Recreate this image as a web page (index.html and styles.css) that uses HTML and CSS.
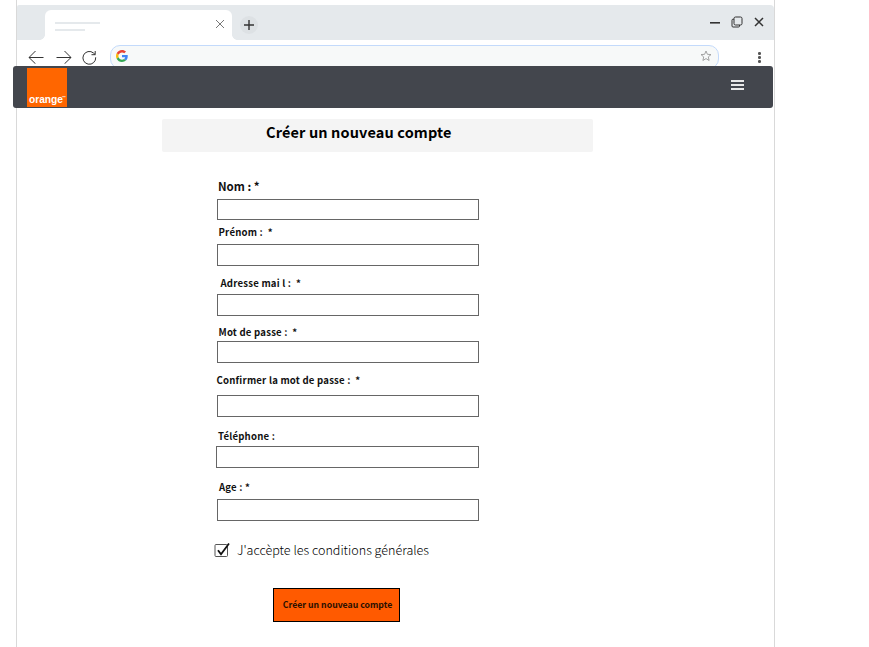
FILE: index.html
```html
<!DOCTYPE html>
<html lang="fr">
<head>
<meta charset="utf-8">
<title>Créer un nouveau compte</title>
<link rel="stylesheet" href="styles.css">
</head>
<body>
<div class="window">
  <div class="titlebar">
    <div class="tab">
      <div class="tab-lines"><i class="line"></i><i class="line short"></i></div>
      <svg class="tab-close" width="10" height="10" viewBox="0 0 10 10"><path d="M1 1l8 8M9 1L1 9"/></svg>
    </div>
    <div class="new-tab"><svg width="10" height="10" viewBox="0 0 10 10"><path d="M5 0v10M0 5h10"/></svg></div>
    <div class="controls">
      <svg width="10" height="12" viewBox="0 0 10 12"><path d="M0 6.800h10" stroke-width="1.600"/></svg>
      <svg width="12" height="12" viewBox="0 0 12 12"><rect x="3" y="1" width="8" height="8" rx="1.500"/><path d="M3 3.200H2A1 1 0 0 0 1 4.200V10a1 1 0 0 0 1 1h5.500a1 1 0 0 0 1-1V9"/></svg>
      <svg width="10" height="12" viewBox="0 0 10 12"><path d="M1 2l8 8M9 2L1 10" stroke-width="1.500"/></svg>
    </div>
  </div>
  <div class="toolbar">
    <svg class="nav" width="16" height="14" viewBox="0 0 16 14"><path d="M15.500 7.500H1M7.500 1L1 7.500l6.500 6.300"/></svg>
    <svg class="nav forward" width="16" height="14" viewBox="0 0 16 14"><path d="M.500 7.500H15M8.500 1L15 7.500l-6.500 6.300"/></svg>
    <svg class="nav reload" width="16" height="16" viewBox="0 0 16 16"><path d="M13.700 7.300A6.400 6.400 0 1 1 11.500 3L13.200 4.600M13.200 1V4.700H9.500"/></svg>
    <div class="address">
      <svg width="12" height="12" viewBox="0 0 48 48">
        <path fill="#ea4335" d="M24 9.500c3.500 0 6.700 1.200 9.200 3.600l6.900-6.900C35.900 2.400 30.500 0 24 0 14.600 0 6.500 5.400 2.600 13.200l8 6.200C12.400 13.700 17.700 9.500 24 9.500z"/>
        <path fill="#4285f4" d="M47 24.500c0-1.600-.2-3.100-.4-4.500H24v9h12.900c-.6 3-2.200 5.500-4.700 7.200l7.700 6C44.400 38 47 31.800 47 24.500z"/>
        <path fill="#fbbc05" d="M10.500 28.600c-.5-1.400-.8-3-.8-4.600s.3-3.200.8-4.600l-8-6.200C.9 16.500 0 20.100 0 24s.9 7.500 2.600 10.800z"/>
        <path fill="#34a853" d="M24 48c6.500 0 11.900-2.100 15.900-5.800l-7.700-6c-2.200 1.400-4.900 2.300-8.200 2.300-6.300 0-11.600-4.200-13.500-9.900l-8 6.200C6.500 42.600 14.600 48 24 48z"/>
      </svg>
      <svg class="star" width="12" height="12" viewBox="0 0 12 12"><path d="M6 1l1.400 3.300 3.600.3-2.700 2.300.8 3.600L6 8.600l-3.100 1.900.8-3.600L1 4.600l3.600-.3z"/></svg>
    </div>
    <div class="dots"><i></i><i></i><i></i></div>
  </div>
  <header class="site-header">
    <div class="logo">orange<sup>™</sup></div>
    <div class="burger"><i></i><i></i><i></i></div>
  </header>
  <h1 class="title">Créer un nouveau compte</h1>
  <form class="form">
    <div class="field nom"><label for="nom">Nom : *</label><input id="nom"></div>
    <div class="field prenom"><label for="prenom">Prénom :&nbsp; *</label><input id="prenom"></div>
    <div class="field mail"><label for="mail">Adresse mai l :&nbsp; *</label><input id="mail"></div>
    <div class="field passe"><label for="passe">Mot de passe :&nbsp; *</label><input id="passe" type="password"></div>
    <div class="field confirm"><label for="confirm">Confirmer la mot de passe :&nbsp; *</label><input id="confirm" type="password"></div>
    <div class="field tel"><label for="tel">Téléphone :</label><input id="tel"></div>
    <div class="field age"><label for="age">Age : *</label><input id="age"></div>
    <div class="terms">
      <svg width="16" height="16" viewBox="0 0 16 16"><rect x="1" y="2.500" width="12.500" height="12" rx="1" fill="none" stroke="#555"/><path d="M4 8.200l3 4L15 1.500" fill="none" stroke="#111" stroke-width="1.800"/></svg>
      <span>J'accèpte les conditions générales</span>
    </div>
    <button class="submit" type="button">Créer un nouveau compte</button>
  </form>
</div>
</body>
</html>
```
FILE: styles.css
```css
* { box-sizing: border-box; }
body {
  margin: 0;
  background: #fff;
  color: #111;
  font-family: "Noto Sans CJK JP", "Noto Sans", sans-serif;
  overflow: hidden;
}
svg { display: block; flex: none; }
.window {
  width: 759px;
  height: 647px;
  margin-left: 16px;
  padding-top: 5px;
  border: solid #d9d9d9;
  border-width: 0 1px;
}
.titlebar {
  display: flex;
  align-items: flex-start;
  height: 35px;
  padding: 5px 10px 0 28px;
  background: #e5e9ec;
  border-radius: 2px 4px 0 0;
}
.tab {
  display: flex;
  justify-content: space-between;
  position: relative;
  width: 187px;
  height: 30px;
  padding: 9px 7px 0 10px;
  background: #fff;
  border-radius: 6px 6px 0 0;
}
/* flared feet where the tab meets the toolbar */
.tab::before, .tab::after {
  content: "";
  position: absolute;
  bottom: 0;
  width: 5px;
  height: 5px;
}
.tab::before { left: -5px; background: radial-gradient(circle at 0 0, transparent 4.500px, #fff 5px); }
.tab::after { right: -5px; background: radial-gradient(circle at 100% 0, transparent 4.500px, #fff 5px); }
.tab-lines { padding-top: 3px; }
.line {
  display: block;
  width: 45px;
  height: 2px;
  margin-bottom: 5px;
  background: #e5e9ec;
}
.short { width: 30px; }
.titlebar path, .titlebar rect { fill: none; stroke: #333; }
.titlebar .tab-close path { stroke: #777; }
.new-tab {
  display: grid;
  place-items: center;
  width: 18px;
  height: 18px;
  margin: 6px 0 0 8px;
  border-radius: 50%;
  background: #dde1e4;
}
.new-tab path { stroke-width: 1.4; }
.controls { display: flex; gap: 11px; margin: 6px 0 0 auto; }
.toolbar {
  display: flex;
  align-items: flex-start;
  height: 26px;
  padding: 5px 13px 0 11px;
  overflow: hidden;
}
.nav { margin-top: 5px; fill: none; stroke: #333; }
.forward { margin-left: 12px; }
.reload { margin-left: 10px; }
.address {
  display: flex;
  justify-content: space-between;
  width: 609px;
  height: 24px;
  margin-left: 12px;
  padding: 4px 6px 0 5px;
  border: 1px solid #c3dafb;
  border-radius: 10px;
  background: #f7f9f9;
}
.star { fill: none; stroke: #999; stroke-width: .9; }
.dots { margin: 7px 0 0 auto; width: 3px; }
.dots i { display: block; width: 2.500px; height: 2.500px; margin-bottom: 1.500px; border-radius: 50%; background: #555; }
.site-header {
  display: flex;
  justify-content: space-between;
  align-items: flex-start;
  width: 760px;
  height: 42px;
  margin-left: -4px;
  padding: 2px 29px 0 14px;
  border-radius: 3px;
  background: #43464d;
  position: relative;
}
.logo {
  display: flex;
  align-items: flex-end;
  width: 40px;
  height: 39px;
  padding: 0 0 1px 2px;
  background: #ff6600;
  color: #fff;
  font: bold 10.200px/12px "Liberation Sans", sans-serif;
}
.logo sup { align-self: flex-end; font-size: 4px; line-height: 12px; padding-bottom: 2px; margin-left: -1px; }
.burger { width: 13px; margin-top: 12px; }
.burger i { display: block; height: 2px; margin-bottom: 2px; background: #e8e8e8; }
.title {
  width: 431px;
  height: 33px;
  margin: 11px 0 0 145px;
  padding-left: 104px;
  border-radius: 2px;
  background: #f4f4f4;
  color: #000;
  font-size: 14.500px;
  font-weight: 700;
  letter-spacing: .13px;
  line-height: 26px;
  white-space: nowrap;
}
.form { width: 263px; margin-left: 199px; }
.field { display: flex; flex-direction: column; padding-left: 1px; }
.field label {
  height: 14px;
  padding-left: 1.500px;
  font-size: 9.600px;
  font-weight: 700;
  letter-spacing: .21px;
  line-height: 14px;
  white-space: pre;
}
.field input {
  width: 262px;
  height: 22px;
  padding: 0 4px;
  border: 1px solid #666;
  background: #fff;
  font: 11px "Noto Sans CJK JP", sans-serif;
}
.nom { margin-top: 27px; gap: 6px; }
.field.nom label { padding-left: 1px; font-size: 11.500px; letter-spacing: 0; }
.nom input { height: 21px; }
.prenom { margin-top: 5px; gap: 5px; }
.mail { margin-top: 10px; gap: 4px; }
.mail label { padding-left: 3.500px; }
.passe { margin-top: 9px; gap: 2px; }
.confirm { margin-top: 10px; gap: 8px; }
.confirm label { padding-left: 0; margin-left: -.5px; }
.tel { margin-top: 12px; gap: 3px; padding-left: 0; }
.tel label { padding-left: 2px; }
.tel input { width: 263px; }
.age { margin-top: 12px; gap: 5px; }
.age label { padding-left: 2px; }
.terms {
  display: flex;
  height: 20px;
  margin: 19px 0 0 -2px;
  gap: 7px;
  align-items: center;
  color: #000;
  font-size: 12.550px;
  font-weight: 300;
  line-height: 20px;
  white-space: nowrap;
}
.submit {
  display: block;
  width: 127px;
  height: 34px;
  margin: 28px 0 0 57px;
  padding: 0 0 0 2px;
  border: 1px solid #000;
  background: #ff5a00;
  color: #2a1000;
  font: 700 8.700px/30px "Noto Sans CJK JP", sans-serif;
  white-space: nowrap;
}
```
